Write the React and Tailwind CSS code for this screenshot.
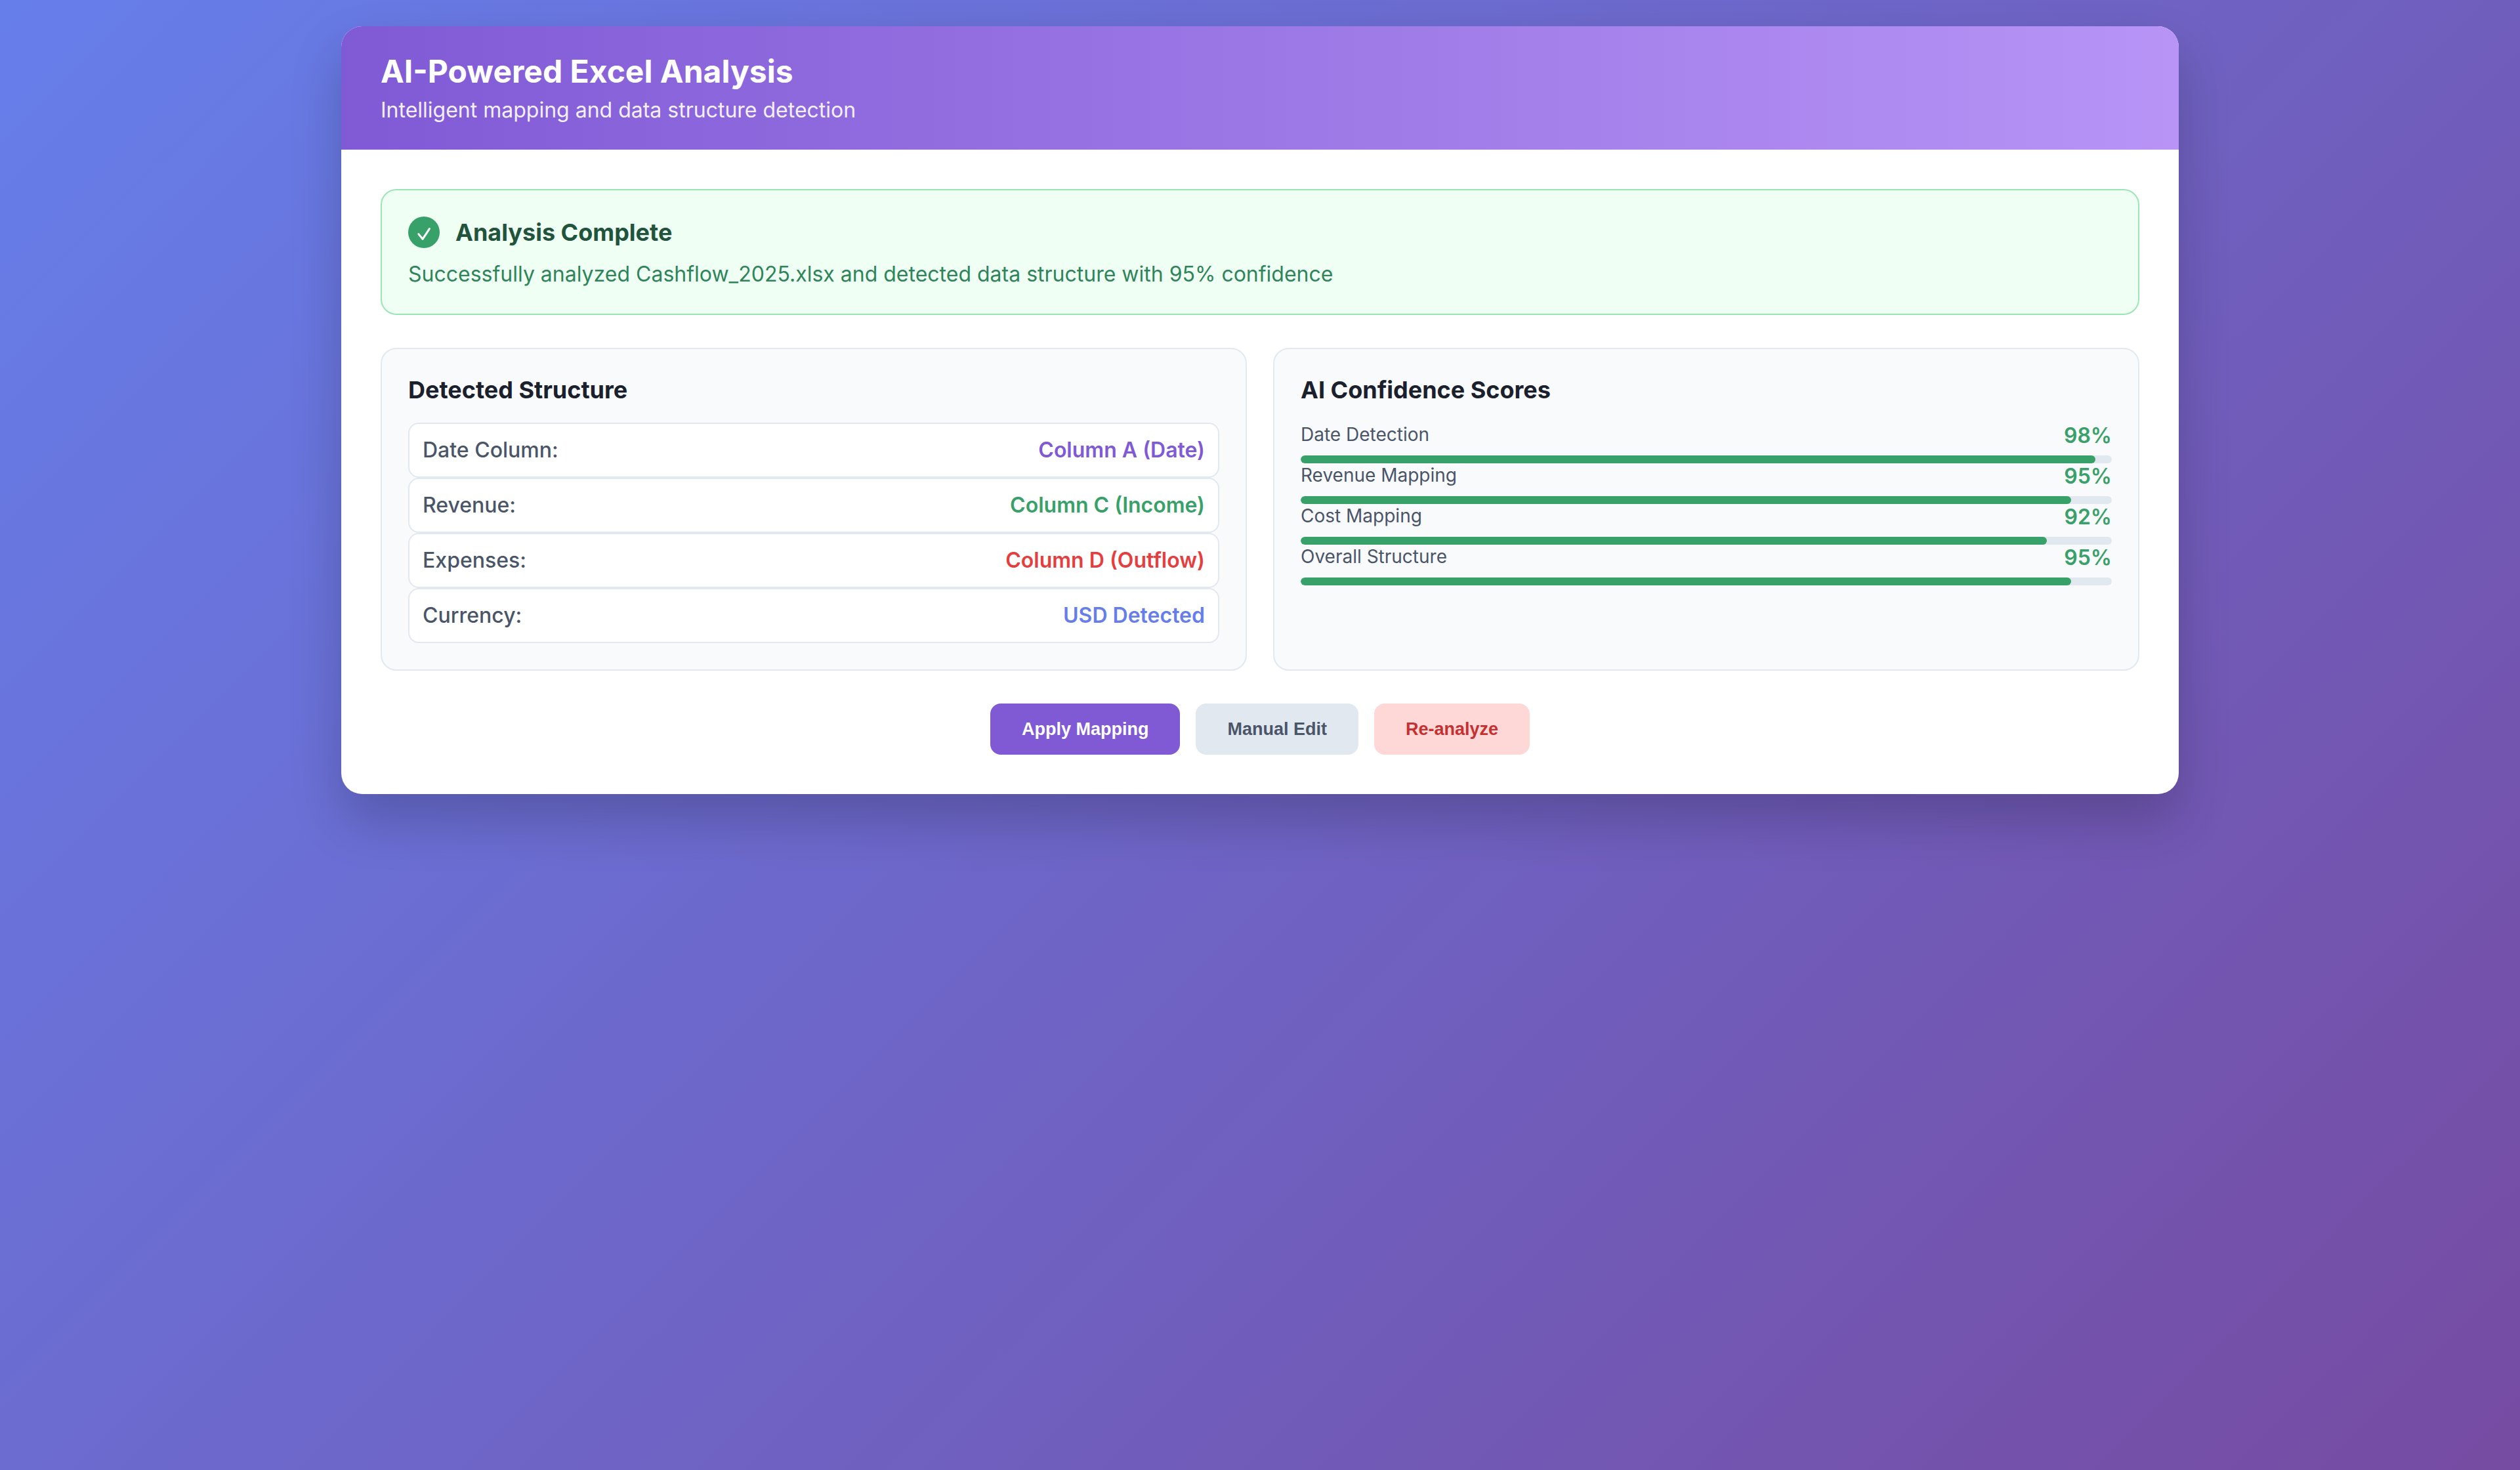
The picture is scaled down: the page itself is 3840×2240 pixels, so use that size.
const structure = [
  { label: "Date Column:", value: "Column A (Date)", color: "text-[#805ad5]" },
  { label: "Revenue:", value: "Column C (Income)", color: "text-[#38a169]" },
  { label: "Expenses:", value: "Column D (Outflow)", color: "text-[#e53e3e]" },
  { label: "Currency:", value: "USD Detected", color: "text-[#667eea]" },
];

const scores = [
  { label: "Date Detection", value: 98 },
  { label: "Revenue Mapping", value: 95 },
  { label: "Cost Mapping", value: 92 },
  { label: "Overall Structure", value: 95 },
];

const actions = [
  { label: "Apply Mapping", style: "bg-[#805ad5] text-white" },
  { label: "Manual Edit", style: "bg-[#e2e8f0] text-[#4a5568]" },
  { label: "Re-analyze", style: "bg-[#fed7d7] text-[#c53030]" },
];

function Panel({ title, children }) {
  return (
    <section className="rounded-3xl border-2 border-[#e2e8f0] bg-[#f9fafc] p-10">
      <h2 className="mb-7 text-[36px] leading-[44px] font-bold text-[#1a202c]">{title}</h2>
      {children}
    </section>
  );
}

function CheckBadge() {
  return (
    <span className="flex size-12 shrink-0 items-center justify-center rounded-full bg-[#38a169]">
      <svg viewBox="0 0 48 48" className="size-12" fill="none" aria-hidden="true">
        <path d="M15.8 26.6 L22 34.3 L32.4 18.6" stroke="white" strokeWidth="3" strokeLinecap="round" strokeLinejoin="round" />
      </svg>
    </span>
  );
}

export default function App() {
  return (
    <div className="min-h-screen bg-[linear-gradient(135deg,#667eea_0%,#764ba2_100%)] p-10 font-[Inter,sans-serif]">
      <main className="mx-auto max-w-[2800px] overflow-hidden rounded-[32px] bg-white shadow-[0_40px_80px_rgba(0,0,0,0.2)]">
        <header className="bg-[linear-gradient(90deg,#805ad5,#b794f6)] px-15 py-10 text-white">
          <h1 className="mb-2.5 text-5xl leading-[58px] font-bold">AI-Powered Excel Analysis</h1>
          <p className="text-[32px] leading-10 opacity-90">Intelligent mapping and data structure detection</p>
        </header>

        <div className="p-15">
          <section className="mb-[50px] rounded-3xl border-2 border-[#9ae6b4] bg-[#f0fff4] p-10">
            <div className="mb-5 flex items-center gap-6">
              <CheckBadge />
              <h2 className="text-[36px] leading-[44px] font-bold text-[#22543d]">Analysis Complete</h2>
            </div>
            <p className="text-[32px] leading-10 text-[#2f855a]">
              Successfully analyzed Cashflow_2025.xlsx and detected data structure with 95% confidence
            </p>
          </section>

          <div className="mb-[50px] grid grid-cols-2 gap-10">
            <Panel title="Detected Structure">
              <dl>
                {structure.map((row) => (
                  <div
                    key={row.label}
                    className="flex justify-between rounded-2xl border-2 border-[#e2e8f0] bg-white p-5 text-[32px] leading-10"
                  >
                    <dt className="font-medium text-[#4a5568]">{row.label}</dt>
                    <dd className={`font-semibold ${row.color}`}>{row.value}</dd>
                  </div>
                ))}
              </dl>
            </Panel>

            <Panel title="AI Confidence Scores">
              {scores.map((score) => (
                <div key={score.label}>
                  <div className="mb-2.5 flex items-start justify-between">
                    <span className="text-[28px] leading-9 text-[#4a5568]">{score.label}</span>
                    <span className="text-[32px] leading-10 font-semibold text-[#38a169]">{score.value}%</span>
                  </div>
                  <div
                    role="progressbar"
                    aria-label={score.label}
                    aria-valuenow={score.value}
                    aria-valuemin={0}
                    aria-valuemax={100}
                    className="h-3 overflow-hidden rounded-full bg-[#e2e8f0]"
                  >
                    <div className="h-full rounded-full bg-[#38a169]" style={{ width: `${score.value}%` }} />
                  </div>
                </div>
              ))}
            </Panel>
          </div>

          <div className="flex justify-center gap-6">
            {actions.map((action) => (
              <button
                key={action.label}
                type="button"
                className={`rounded-2xl px-12 py-6 font-['Liberation_Sans',Arial,sans-serif] text-[27px] leading-[30px] font-bold ${action.style}`}
              >
                {action.label}
              </button>
            ))}
          </div>
        </div>
      </main>
    </div>
  );
}
